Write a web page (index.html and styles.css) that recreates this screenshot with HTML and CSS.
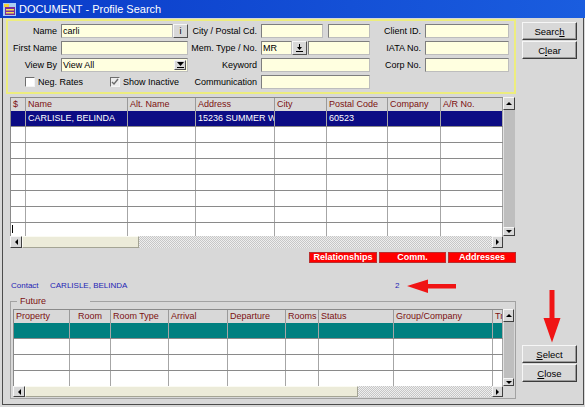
FILE: index.html
```html
<!DOCTYPE html>
<html lang="en">
<head>
<meta charset="utf-8">
<title>DOCUMENT - Profile Search</title>
<link rel="stylesheet" href="styles.css">
</head>
<body>
<div class="window">
  <div class="titlebar">
    <svg class="app-icon" width="13" height="13" viewBox="0 0 13 13">
      <rect x="0" y="0" width="13" height="13" fill="#a9cdf2"/>
      <rect x="1" y="1" width="5" height="3" fill="#f2d23a"/>
      <rect x="2" y="4" width="10" height="8" fill="#7a2c9c"/>
      <rect x="3" y="6" width="8" height="1.5" fill="#f6dc52"/>
      <rect x="3" y="9" width="8" height="1.5" fill="#f6dc52"/>
    </svg>
    <span class="title-text">DOCUMENT - Profile Search</span>
  </div>
  <div class="client">
    <div class="main">
      <div class="search-panel">
        <span class="lbl">Name</span>
        <div class="combo"><div class="field f-name">carli</div><div class="mini-btn">i</div></div>
        <span class="lbl">City / Postal Cd.</span>
        <div class="combo"><div class="field f-city"></div><div class="field f-post"></div></div>
        <span class="lbl">Client ID.</span>
        <div class="field"></div>

        <span class="lbl">First Name</span>
        <div class="field"></div>
        <span class="lbl">Mem. Type / No.</span>
        <div class="combo"><div class="field f-mem">MR</div><div class="mini-btn"><svg width="7" height="8" viewBox="0 0 7 8"><path d="M3 0h1v3h2l-2.5 3L1 3h2z" fill="#000"/><rect x="0" y="7" width="7" height="1" fill="#000"/></svg></div><div class="field f-memno"></div></div>
        <span class="lbl">IATA No.</span>
        <div class="field"></div>

        <span class="lbl">View By</span>
        <div class="field select"><span class="sel-text">View All</span><span class="drop-btn"><svg width="7" height="6" viewBox="0 0 7 6"><path d="M0 0h7L3.5 4z" fill="#000"/><rect x="0" y="5" width="7" height="1" fill="#000"/></svg></span></div>
        <span class="lbl">Keyword</span>
        <div class="field"></div>
        <span class="lbl">Corp No.</span>
        <div class="field"></div>

        <div class="checks">
          <span class="chk-item neg"><span class="chk"></span>Neg. Rates</span>
          <span class="chk-item"><span class="chk checked"><svg width="8" height="8" viewBox="0 0 8 8"><path d="M1 4l2 2 4-5" fill="none" stroke="#6c6c6c" stroke-width="1.4"/></svg></span>Show Inactive</span>
        </div>
        <span class="lbl">Communication</span>
        <div class="field"></div>
      </div>

      <div class="results">
        <div class="res-top">
          <div class="table t1">
            <div class="row hdr"><span>$</span><span>Name</span><span>Alt. Name</span><span>Address</span><span>City</span><span>Postal Code</span><span>Company</span><span>A/R No.</span></div>
            <div class="row data sel"><span></span><span>CARLISLE, BELINDA</span><span></span><span>15236 SUMMER WAY</span><span></span><span>60523</span><span></span><span></span></div>
            <div class="row data"><span></span><span></span><span></span><span></span><span></span><span></span><span></span><span></span></div>
            <div class="row data"><span></span><span></span><span></span><span></span><span></span><span></span><span></span><span></span></div>
            <div class="row data"><span></span><span></span><span></span><span></span><span></span><span></span><span></span><span></span></div>
            <div class="row data"><span></span><span></span><span></span><span></span><span></span><span></span><span></span><span></span></div>
            <div class="row data"><span></span><span></span><span></span><span></span><span></span><span></span><span></span><span></span></div>
            <div class="row data"><span></span><span></span><span></span><span></span><span></span><span></span><span></span><span></span></div>
            <div class="row last"><span><i class="caret"></i></span><span></span><span></span><span></span><span></span><span></span><span></span><span></span></div>
          </div>
          <div class="vs vs1"><span class="sb up"></span><span class="vtrack"></span><span class="sb dn"></span></div>
        </div>
        <div class="res-bot">
          <div class="hs hs1"><span class="sb lt"></span><span class="thumb"></span><span class="track"></span><span class="sb rt"></span></div>
        </div>
      </div>

      <div class="tabs">
        <span class="tab">Relationships</span>
        <span class="tab t-comm">Comm.</span>
        <span class="tab">Addresses</span>
      </div>

      <div class="contact">
        <span class="c-lbl">Contact</span><span class="c-name">CARLISLE, BELINDA</span><span class="c-num">2</span>
      </div>

      <fieldset class="group">
        <legend>Future</legend>
        <div class="res-top">
          <div class="table t2">
            <div class="row hdr"><span>Property</span><span class="ctr">Room</span><span>Room Type</span><span>Arrival</span><span>Departure</span><span>Rooms</span><span>Status</span><span>Group/Company</span><span>Travel Agent</span></div>
            <div class="row data teal"><span></span><span></span><span></span><span></span><span></span><span></span><span></span><span></span><span></span></div>
            <div class="row data"><span></span><span></span><span></span><span></span><span></span><span></span><span></span><span></span><span></span></div>
            <div class="row data"><span></span><span></span><span></span><span></span><span></span><span></span><span></span><span></span><span></span></div>
            <div class="row last"><span></span><span></span><span></span><span></span><span></span><span></span><span></span><span></span><span></span></div>
          </div>
          <div class="vs vs2"><span class="sb up"></span><span class="vtrack"></span><span class="sb dn"></span></div>
        </div>
        <div class="res-bot">
          <div class="hs hs2"><span class="sb lt"></span><span class="thumb"></span><span class="track"></span><span class="sb rt"></span></div>
        </div>
      </fieldset>
    </div>

    <div class="side">
      <div class="btn-group">
        <button class="pbtn" type="button">Searc<u>h</u></button>
        <button class="pbtn" type="button">C<u>l</u>ear</button>
      </div>
      <div class="btn-group">
        <button class="pbtn" type="button"><u>S</u>elect</button>
        <button class="pbtn" type="button"><u>C</u>lose</button>
      </div>
    </div>

    <svg class="anno anno-left" width="50" height="15" viewBox="0 0 50 15">
      <path d="M0 7 L21 0.5 L21 5 L49 5 L49 9.5 L21 9.5 L21 14 Z" fill="#f01414"/>
    </svg>
    <svg class="anno anno-down" width="18" height="53" viewBox="0 0 18 53">
      <path d="M6.5 0 H11.5 V28 H17.5 L9 52.5 L0.5 28 H6.5 Z" fill="#f01414"/>
    </svg>
  </div>
</div>
</body>
</html>
```

FILE: styles.css
```css
* { box-sizing: border-box; }
html, body { margin: 0; padding: 0; }
body {
  width: 585px;
  height: 407px;
  overflow: hidden;
  background: #d8d8d8;
  font-family: "Liberation Sans", Arial, sans-serif;
  font-size: 9px;
  color: #000;
}

.window {
  width: 585px;
  height: 407px;
  display: flex;
  flex-direction: column;
  background: #d8d8d8;
}

/* title bar */
.titlebar {
  height: 18px;
  flex: none;
  display: flex;
  align-items: center;
  gap: 3px;
  padding-left: 3px;
  background: linear-gradient(90deg, #0a3bc9 0%, #1450d6 60%, #1a5ddf 100%);
  color: #fff;
  font-size: 11px;
}
.app-icon { display: block; }
.title-text { line-height: 18px; }

/* client area */
.client {
  position: relative;
  flex: 1;
  margin: 0 1px 2px 2px;
  border: 1px solid #4c4c4c;
  border-top: 0;
  padding: 1px 0 0 3px;
  display: flex;
}

.main {
  width: 510px;
  display: flex;
  flex-direction: column;
}

.side {
  width: 55px;
  margin-left: 6px;
  padding: 3px 0 22px;
  display: flex;
  flex-direction: column;
  justify-content: space-between;
}
.btn-group { display: flex; flex-direction: column; gap: 1px; }

.pbtn {
  width: 55px;
  height: 18px;
  margin: 0;
  padding: 0;
  background: #d8d8d8;
  border: 1px solid;
  border-color: #f6f6f6 #3c3c3c #3c3c3c #f6f6f6;
  box-shadow: inset -1px -1px 0 #9a9a9a;
  font-family: "Liberation Sans", Arial, sans-serif;
  font-size: 9.5px;
  color: #000;
  line-height: 15px;
  text-align: center;
}
.pbtn u { text-decoration: underline; }

/* search panel */
.search-panel {
  height: 75px;
  border: 2px solid #eded7e;
  padding: 3px 0;
  display: grid;
  grid-template-columns: 53px 127px 73px 109px 55px 84px;
  grid-auto-rows: 14px;
  row-gap: 3px;
}
.lbl {
  text-align: right;
  padding-right: 4px;
  line-height: 14px;
  white-space: nowrap;
}
.field {
  height: 14px;
  border: 1px solid;
  border-color: #7e7e7e #bdbdbd #bdbdbd #7e7e7e;
  background: #ffffe0;
  padding: 0 1px;
  line-height: 12px;
  white-space: nowrap;
  overflow: hidden;
}
.combo { display: flex; }
.f-name { width: 112px; }
.f-city { width: 62px; }
.f-post { width: 42px; margin-left: 5px; }
.f-mem { width: 31px; }
.f-memno { width: 62px; margin-left: 1px; }

.mini-btn {
  width: 15px;
  height: 14px;
  border: 1px solid;
  border-color: #f6f6f6 #505050 #505050 #f6f6f6;
  background: #d8d8d8;
  display: flex;
  align-items: center;
  justify-content: center;
  font-size: 9px;
  line-height: 12px;
}
.select {
  display: flex;
  align-items: center;
  justify-content: space-between;
  padding-right: 1px;
}
.drop-btn {
  width: 12px;
  height: 10px;
  border: 1px solid;
  border-color: #f6f6f6 #505050 #505050 #f6f6f6;
  background: #d8d8d8;
  display: flex;
  align-items: center;
  justify-content: center;
}
.drop-btn svg { display: block; }

.checks {
  grid-column: span 2;
  display: flex;
  align-items: center;
  padding-left: 17px;
}
.chk-item {
  display: flex;
  align-items: center;
  gap: 3px;
  white-space: nowrap;
}
.chk-item.neg { width: 85px; }
.chk {
  width: 10px;
  height: 10px;
  border: 1px solid;
  border-color: #6e6e6e #f4f4f4 #f4f4f4 #6e6e6e;
  background: #fff;
  display: flex;
  align-items: center;
  justify-content: center;
}
.chk.checked { background: #ececec; }
.chk svg { display: block; }

/* grids */
.results {
  width: 505px;
  margin: 3px 0 0 4px;
}
.res-top { display: flex; }
.res-bot { display: flex; }

.table {
  border-top: 1px solid #8a8a8a;
  border-left: 1px solid #8a8a8a;
  overflow: hidden;
}
.t1 { width: 493px; height: 139px; }
.t2 { width: 490px; height: 77px; }

.row { display: grid; }
.t1 .row { grid-template-columns: 15px 102px 68px 79px 52px 61px 53px 62px; }
.t2 .row { grid-template-columns: 56px 41px 58px 59px 58px 33px 75px 99px 10px; }

.row > span {
  border-right: 1px solid #a6a6a6;
  padding-left: 2px;
  white-space: nowrap;
  overflow: hidden;
}
.row.hdr { height: 13px; background: #d8d8d8; }
.row.hdr > span { line-height: 13px; color: #7c1010; border-right-color: #9a9a9a; }
.row.hdr > span.ctr { text-align: center; padding-left: 0; }
.row.data { height: 16px; background: #fff; border-bottom: 1px solid #8a8a8a; }
.row.data > span { line-height: 15px; }
.row.last { height: 15px; background: #fff; }
.t1 .row.last { height: 13px; }
.row.sel { background: #0c0c84; color: #fff; }
.row.teal { background: #008080; }
.row:last-child > span:last-child { }
.caret {
  display: block;
  width: 1px;
  height: 8px;
  margin: 2px 0 0 -1px;
  background: #000;
}

.vs {
  display: flex;
  flex-direction: column;
  background: #bfbfbf;
}
.vs1 { width: 12px; height: 139px; }
.vs2 { width: 11px; height: 77px; }
.vs .up { height: 13px; }
.vs1 .dn { height: 9px; }
.vs2 .dn { height: 8px; }
.vtrack {
  flex: 1;
  background: #bebebe;
  border-left: 1px solid #e2e2e2;
}

.sb {
  display: flex;
  align-items: center;
  justify-content: center;
  background: #d8d8d8;
  border: 1px solid;
  border-color: #f6f6f6 #404040 #404040 #f6f6f6;
}
.sb::after {
  content: "";
  width: 0;
  height: 0;
  border-style: solid;
  border-color: transparent;
}
.sb.up::after { border-width: 0 3px 3px 3px; border-bottom-color: #000; }
.sb.dn::after { border-width: 3px 3px 0 3px; border-top-color: #000; }
.sb.lt::after { border-width: 3px 3px 3px 0; border-right-color: #000; }
.sb.rt::after { border-width: 3px 0 3px 3px; border-left-color: #000; }

.hs { display: flex; }
.hs1 { width: 493px; height: 12px; }
.hs2 { width: 490px; height: 11px; }
.hs .lt { width: 12px; }
.hs .rt { width: 11px; }
.hs1 .thumb { width: 117px; }
.hs2 .thumb { width: 333px; }
.thumb {
  background: #ecebd9;
  border: 1px solid;
  border-color: #fbfbf3 #a4a494 #a4a494 #fbfbf3;
}
.track {
  flex: 1;
  background: repeating-conic-gradient(#c6c6c6 0% 25%, #eeeeee 0% 50%) 0 0 / 2px 2px;
}

/* red tabs */
.tabs {
  height: 11px;
  margin-top: 4px;
  display: flex;
  justify-content: flex-end;
  gap: 2px;
}
.tab {
  width: 68px;
  height: 11px;
  background: #ff0000;
  border: 1px solid #b83030;
  color: #fff;
  font-weight: bold;
  font-size: 9px;
  line-height: 9px;
  text-align: center;
  white-space: nowrap;
}
.tab.t-comm { width: 67px; }

/* contact line */
.contact {
  height: 10px;
  margin-top: 18px;
  padding-left: 5px;
  display: flex;
  font-size: 8px;
  line-height: 10px;
  color: #2424b4;
  white-space: nowrap;
}
.c-lbl { width: 39px; }
.c-name { width: 345px; }

/* group box */
.group {
  width: 506px;
  margin: 5px 0 0 4px;
  padding: 2px 1px 1px 2px;
  border: 1px solid #a2a2a2;
  min-width: 0;
}
.group legend {
  width: 73px;
  margin-left: 4px;
  padding: 0 0 0 3px;
  font-size: 9px;
  line-height: 11px;
  color: #7c1010;
}

/* annotation arrows drawn over the screenshot */
.anno { position: absolute; display: block; }
.anno-left { left: 404px; top: 261px; }
.anno-down { left: 540px; top: 272px; }
```
